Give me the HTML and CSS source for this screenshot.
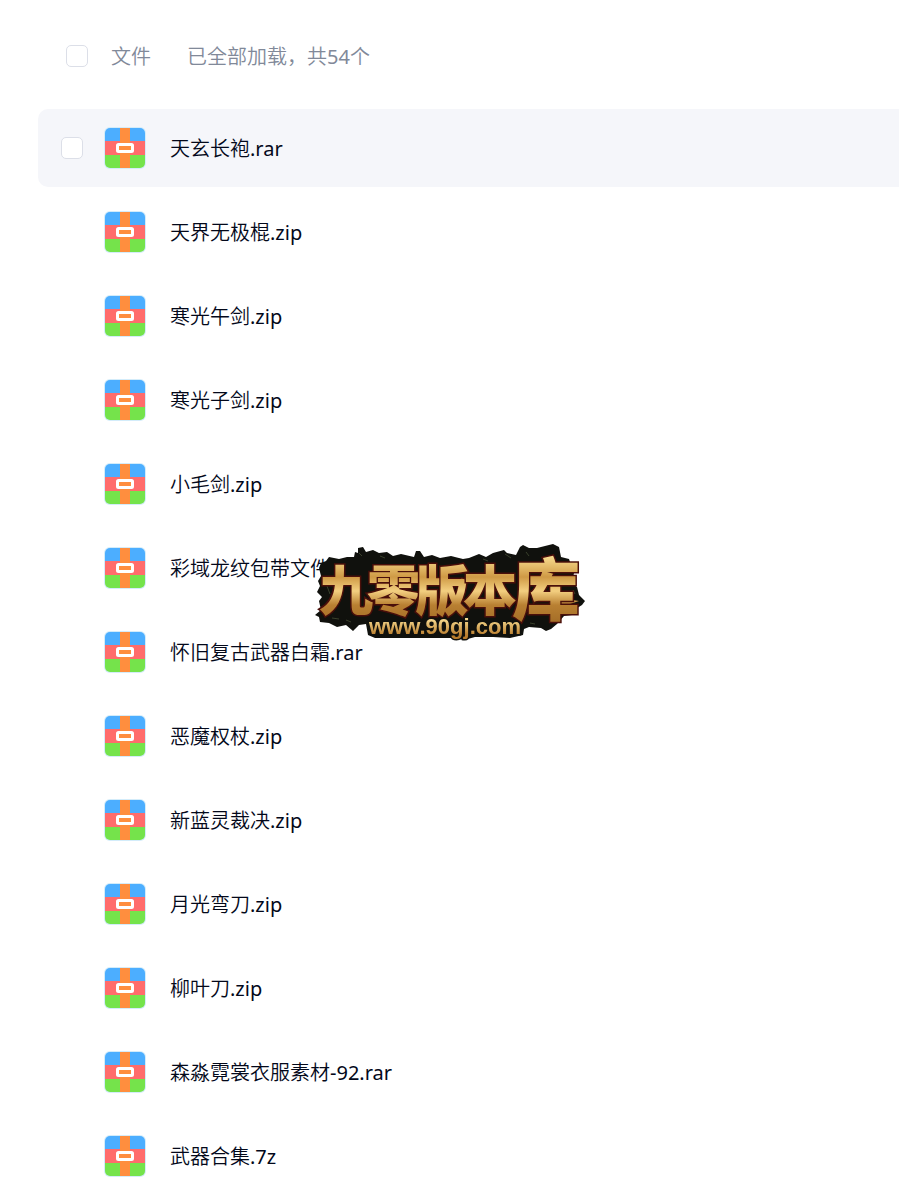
FILE: index.html
```html
<!DOCTYPE html>
<html lang="zh-CN">
<head>
  <meta charset="UTF-8">
  <meta name="viewport" content="width=device-width, initial-scale=1.0">
  <title>文件</title>
  <link rel="stylesheet" href="styles.css">
</head>
<body>
  <svg class="symbols" aria-hidden="true">
    <symbol id="archive" viewBox="0 0 42 42">
      <rect width="42" height="42" rx="6" fill="#d3ecfa"/>
      <path d="M1 15V6a5 5 0 0 1 5-5h30a5 5 0 0 1 5 5v9z" fill="#4caeff"/>
      <path d="M1 14h40v14H1z" fill="#ff6c6c"/>
      <path d="M1 28h40v8a5 5 0 0 1-5 5H6a5 5 0 0 1-5-5z" fill="#75e34b"/>
      <path d="M16 1h10v40H16z" fill="#ff8e3e"/>
      <rect x="13.500" y="17.500" width="15" height="7" rx="1" fill="#ff8e3e" stroke="#fff" stroke-width="3"/>
    </symbol>
  </svg>

  <main class="files">
    <header class="files-header">
      <label class="select-all"><input type="checkbox" class="check"><span class="name">文件</span></label>
      <span class="name">已全部加载，共54个</span>
    </header>
    <ul class="file-list">
      <li><label class="file active"><input type="checkbox" class="check"><svg class="icon"><use href="#archive"/></svg><span class="name">天玄长袍.rar</span></label></li>
      <li><label class="file"><input type="checkbox" class="check"><svg class="icon"><use href="#archive"/></svg><span class="name">天界无极棍.zip</span></label></li>
      <li><label class="file"><input type="checkbox" class="check"><svg class="icon"><use href="#archive"/></svg><span class="name">寒光午剑.zip</span></label></li>
      <li><label class="file"><input type="checkbox" class="check"><svg class="icon"><use href="#archive"/></svg><span class="name">寒光子剑.zip</span></label></li>
      <li><label class="file"><input type="checkbox" class="check"><svg class="icon"><use href="#archive"/></svg><span class="name">小毛剑.zip</span></label></li>
      <li><label class="file"><input type="checkbox" class="check"><svg class="icon"><use href="#archive"/></svg><span class="name">彩域龙纹包带文件</span></label></li>
      <li><label class="file"><input type="checkbox" class="check"><svg class="icon"><use href="#archive"/></svg><span class="name">怀旧复古武器白霜.rar</span></label></li>
      <li><label class="file"><input type="checkbox" class="check"><svg class="icon"><use href="#archive"/></svg><span class="name">恶魔权杖.zip</span></label></li>
      <li><label class="file"><input type="checkbox" class="check"><svg class="icon"><use href="#archive"/></svg><span class="name">新蓝灵裁决.zip</span></label></li>
      <li><label class="file"><input type="checkbox" class="check"><svg class="icon"><use href="#archive"/></svg><span class="name">月光弯刀.zip</span></label></li>
      <li><label class="file"><input type="checkbox" class="check"><svg class="icon"><use href="#archive"/></svg><span class="name">柳叶刀.zip</span></label></li>
      <li><label class="file"><input type="checkbox" class="check"><svg class="icon"><use href="#archive"/></svg><span class="name">森淼霓裳衣服素材-92.rar</span></label></li>
      <li><label class="file"><input type="checkbox" class="check"><svg class="icon"><use href="#archive"/></svg><span class="name">武器合集.7z</span></label></li>
    </ul>
  </main>

  <svg class="watermark" viewBox="0 0 270 96">
    <defs>
      <linearGradient id="gold" gradientUnits="userSpaceOnUse" x1="0" y1="12" x2="0" y2="82">
        <stop offset="0" stop-color="#f9dd90"/>
        <stop offset=".3" stop-color="#cf9a45"/>
        <stop offset=".5" stop-color="#f3cf80"/>
        <stop offset=".7" stop-color="#b98032"/>
        <stop offset="1" stop-color="#a06a25"/>
      </linearGradient>
      <linearGradient id="gold-small" x1="0" y1="0" x2="0" y2="1">
        <stop offset=".2" stop-color="#f8dc91"/>
        <stop offset=".85" stop-color="#b87c2c"/>
      </linearGradient>
    </defs>
    <!-- torn dark backing -->
    <path fill="#10110d" d="M6 19L11 17 14 13 24 15 32 13 39 13 40 8 43 9 43 4 48 3 51 8 58 6 64 9 72 8 78 12 86 10 99 13 101 7 105 7 109 13 117 11 125 14 136 12 148 15 154 14 164 10 171 13 178 9 189 6 192 9 201 11 205 3 208 1 214 4 222 4 238 0 244 3 246 13 254 15 256 21 253 27 259 29 257 39 262 43 264 51 270 57 267 61 259 66 257 71 249 72 242 80 236 85 231 87 226 84 214 83 209 85 208 91 195 94 178 93 160 93 149 96 140 94 100 94 60 94 53 91 51 80 44 81 38 87 31 81 22 83 14 79 5 78 4 73 0 71 6 66 4 57 7 53 2 48 5 42 3 37 6 32 4 24z"/>
    <path class="specks" d="M44 9l3 3M65 12l5 2M17 74l7 1M12 42l3 8M168 15l5 2M190 10l6 4M211 8l3 4M250 20l3 3M258 46l2 4M215 79l5 1M31 76l5 2"/>
    <path class="blade" d="M238 53l26 4-18 6-9 1z"/>
    <g class="brand">
      <text x="4 52 100 148" y="67">九零版本</text>
      <text class="last" x="197" y="71">库</text>
    </g>
    <text class="site" x="130" y="90">www.90gj.com</text>
  </svg>
</body>
</html>
```
FILE: styles.css
```css
* {
  box-sizing: border-box;
}
body {
  margin: 0;
  height: 100vh;
  overflow: hidden;
  background: #fff;
  color: #03081a;
  font-family: "Noto Sans", "Noto Sans CJK SC DemiLight", "Noto Sans CJK SC", sans-serif;
  font-size: 20px;
  line-height: 28px;
}
.symbols {
  display: none;
}
.files {
  padding: 34px 0 0 38px;
}
.files-header {
  display: flex;
  align-items: center;
  gap: 36px;
  height: 44px;
  margin-bottom: 31px;
  padding-left: 28px;
  color: #818999;
}
.select-all {
  display: flex;
  align-items: center;
  gap: 23px;
}
.check {
  appearance: none;
  flex: none;
  width: 22px;
  height: 22px;
  margin: 0;
  border: 1px solid #dcdfe8;
  border-radius: 5px;
  background: #fff;
}
.check:checked {
  background: #4caeff;
}
.file-list {
  display: flex;
  flex-direction: column;
  gap: 6px;
  margin: 0;
  padding: 0;
  list-style: none;
}
.file {
  display: flex;
  align-items: center;
  height: 78px;
  padding-left: 23px;
  border-radius: 10px 0 0 10px;
}
.file.active,
.file:hover {
  background: #f5f6fa;
}
.file .check {
  opacity: 0;
}
.file.active .check,
.file:hover .check,
.file .check:checked {
  opacity: 1;
}
.icon {
  width: 42px;
  height: 42px;
  margin: 0 24px 0 21px;
}
.name {
  padding-top: 2px;
}
.watermark {
  position: fixed;
  inset: 0;
  width: 270px;
  height: 96px;
  margin: auto;
  overflow: visible;
  pointer-events: none;
}
.brand {
  fill: url(#gold);
  stroke: #4a0f0a;
  stroke-width: 3;
  paint-order: stroke;
  font-family: "Noto Sans CJK SC", sans-serif;
  font-size: 54px;
  font-weight: 900;
}
.last {
  font-size: 68px;
}
.blade {
  fill: url(#gold);
}
.specks {
  fill: none;
  stroke: #39402b;
  stroke-width: 1;
}
.site {
  fill: url(#gold-small);
  stroke: #10110d;
  stroke-width: 3;
  paint-order: stroke;
  font-family: "Liberation Sans", Arial, sans-serif;
  font-size: 22px;
  font-weight: 700;
  text-anchor: middle;
}
```
